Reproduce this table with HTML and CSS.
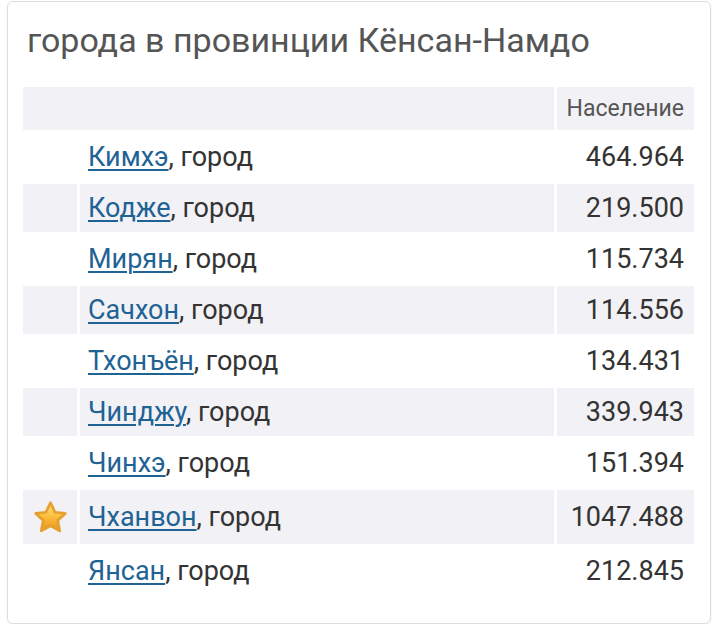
FILE: index.html
```html
<!DOCTYPE html>
<html lang="ru">
<head>
<meta charset="utf-8">
<title>города в провинции Кёнсан-Намдо</title>
<link rel="stylesheet" href="styles.css">
</head>
<body>
<div class="card">
  <h2 class="title">города в провинции Кёнсан-Намдо</h2>
  <table class="cities">
    <colgroup>
      <col class="col-icon">
      <col class="col-name">
      <col class="col-pop">
    </colgroup>
    <thead>
      <tr class="alt">
        <th class="c-blank" colspan="2"></th>
        <th class="c-pop">Население</th>
      </tr>
    </thead>
    <tbody>
      <tr><td class="c-icon"></td><td class="c-name"><a href="#">Кимхэ</a>, город</td><td class="c-pop">464.964</td></tr>
      <tr class="alt"><td class="c-icon"></td><td class="c-name"><a href="#">Кодже</a>, город</td><td class="c-pop">219.500</td></tr>
      <tr><td class="c-icon"></td><td class="c-name"><a href="#">Мирян</a>, город</td><td class="c-pop">115.734</td></tr>
      <tr class="alt"><td class="c-icon"></td><td class="c-name"><a href="#">Сачхон</a>, город</td><td class="c-pop">114.556</td></tr>
      <tr><td class="c-icon"></td><td class="c-name"><a href="#">Тхонъён</a>, город</td><td class="c-pop">134.431</td></tr>
      <tr class="alt"><td class="c-icon"></td><td class="c-name"><a href="#">Чинджу</a>, город</td><td class="c-pop">339.943</td></tr>
      <tr><td class="c-icon"></td><td class="c-name"><a href="#">Чинхэ</a>, город</td><td class="c-pop">151.394</td></tr>
      <tr class="alt star-row"><td class="c-icon">
        <svg class="star" viewBox="0 0 40 38" width="37" height="35">
          <defs>
            <linearGradient id="sg" x1="0" y1="0" x2="0" y2="1">
              <stop offset="0" stop-color="#ffe58a"/>
              <stop offset="0.5" stop-color="#fbbd3a"/>
              <stop offset="1" stop-color="#eb9420"/>
            </linearGradient>
          </defs>
          <path d="M20 3 L24.9 13.3 L36 14.6 L27.8 22.3 L30 33.5 L20 28 L10 33.5 L12.2 22.3 L4 14.6 L15.1 13.3 Z" fill="url(#sg)" stroke="#e6a030" stroke-width="3" stroke-linejoin="round"/>
        </svg>
      </td><td class="c-name"><a href="#">Чханвон</a>, город</td><td class="c-pop">1047.488</td></tr>
      <tr><td class="c-icon"></td><td class="c-name"><a href="#">Янсан</a>, город</td><td class="c-pop">212.845</td></tr>
    </tbody>
  </table>
</div>
</body>
</html>
```

FILE: styles.css
```css
html, body {
  margin: 0;
  padding: 0;
  background: #ffffff;
}

body {
  font-family: Roboto, "Noto Sans", sans-serif;
  color: #333333;
}

.card {
  margin: 1px 9px 0 7px;
  height: 623px;
  border: 1px solid #dedde3;
  border-radius: 6px;
  box-shadow: 0 1px 2px rgba(0, 0, 0, 0.08);
  padding: 0 13px 0 12px;
  box-sizing: border-box;
}

.title {
  margin: 0 0 24px 0;
  padding: 18px 0 0 7px;
  font-size: 34px;
  font-weight: 400;
  color: #555555;
  line-height: 40px;
}

.cities {
  width: 100%;
  border-collapse: separate;
  border-spacing: 3px;
  font-size: 27px;
}

.col-icon {
  width: 54px;
}

.col-pop {
  width: 137px;
}

.cities th,
.cities td {
  padding: 0;
  vertical-align: middle;
}

.cities thead th {
  height: 43px;
  font-size: 23px;
  font-weight: 400;
  color: #555555;
}

.cities tbody td {
  height: 48px;
}

.cities .star-row td {
  height: 54px;
}

.c-icon {
  text-align: center;
}

.cities .c-name {
  text-align: left;
  padding-left: 8px;
}

.cities .c-pop {
  text-align: right;
  padding-right: 10px;
}

.alt th,
.alt td {
  background: #f2f1f6;
}

.cities a {
  color: #1f6294;
  text-decoration: underline;
  text-underline-offset: 3px;
  text-decoration-thickness: 1.5px;
}

.star {
  display: block;
  margin: 0 auto;
}
```
